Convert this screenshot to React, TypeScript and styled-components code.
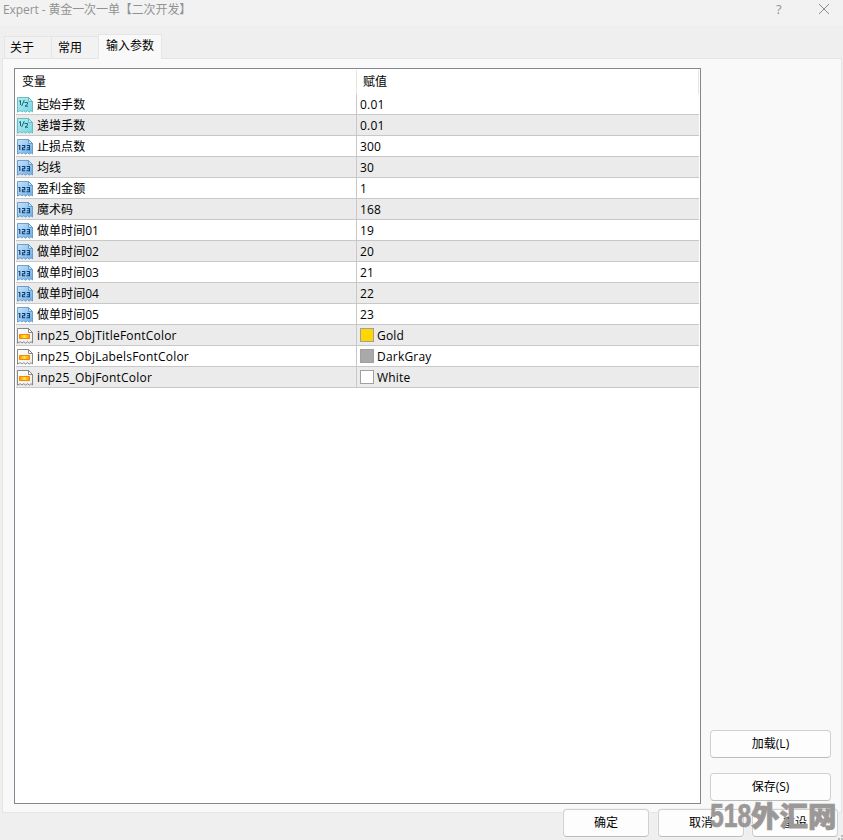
import React from "react";
import styled, { createGlobalStyle } from "styled-components";

const Global = createGlobalStyle`
  * { box-sizing: border-box; }
  body { margin: 0; overflow: hidden; background: #efefef; }
`;

const Dialog = styled.div`
  position: relative;
  display: flex;
  flex-direction: column;
  width: 843px;
  height: 840px;
  overflow: hidden;
  background: #efefef;
  color: #000;
  font: 12px/16px "Open Sans", "Noto Sans CJK SC", sans-serif;
  white-space: nowrap;
`;

const TitleBar = styled.header`
  display: flex;
  height: 25px;
  flex: none;
  background: #f2f2f2;
  color: #929292;
  padding: 2px 13px 0 3px;
`;
const Title = styled.div`
  flex: 1;
  letter-spacing: -0.1px;
`;
const Help = styled.div`
  width: 10px;
  margin-right: 32px;
  font-size: 13px;
  line-height: 15px;
`;
const CloseIcon = styled.svg`
  width: 12px;
  height: 12px;
  margin-top: 1px;
`;

const Tabs = styled.nav`
  display: flex;
  align-items: flex-end;
  height: 34px;
  flex: none;
  padding-left: 4px;
  margin-bottom: -1px;
  z-index: 1;
`;
const Tab = styled.div<{ $active?: boolean; $w: number; $inset: number }>`
  width: ${p => p.$w}px;
  height: ${p => (p.$active ? 25 : 22)}px;
  margin-bottom: ${p => (p.$active ? 0 : 1)}px;
  padding-top: 3px;
  padding-left: ${p => p.$inset}px;
  border: 1px solid #e5e5e5;
  border-bottom: 0;
  background: ${p => (p.$active ? "#f9f9f9" : "#f2f2f2")};
  & + & { margin-left: -1px; }
`;

const Panel = styled.main`
  display: flex;
  flex: none;
  width: 840px;
  height: 755px;
  margin-left: 2px;
  padding: 9px 10px 8px 11px;
  border: 1px solid #e5e5e5;
  background: #f9f9f9;
`;

const List = styled.section`
  width: 687px;
  height: 736px;
  border: 1px solid #828790;
  background: #fff;
  padding-left: 1px;
  padding-right: 1px;
`;
const HeaderRow = styled.div`
  display: flex;
  height: 25px;
  padding-top: 1px;
`;
const HeaderCell = styled.div<{ $w: number }>`
  width: ${p => p.$w}px;
  padding: 4px 0 0 6px;
  border-right: 1px solid #e5e5e5;
`;
const Row = styled.div<{ $alt: boolean }>`
  display: flex;
  height: 21px;
  border-bottom: 1px solid #c8c8c8;
  background: ${p => (p.$alt ? "#ebebeb" : "#fff")};
`;
const NameCell = styled.div`
  display: flex;
  align-items: center;
  width: 341px;
  border-right: 1px solid #c8c8c8;
`;
const ParamIcon = styled.svg`
  width: 18px;
  height: 18px;
  margin-right: 3px;
`;
const ValueCell = styled.div`
  display: flex;
  align-items: center;
  padding-left: 3px;
`;
const CellText = styled.span`
  padding-top: 2px;
  letter-spacing: 0.2px;
  &:lang(zh) { letter-spacing: 0.05px; }
`;
const Swatch = styled.span<{ $color: string }>`
  width: 14px;
  height: 14px;
  margin-right: 3px;
  border: 1px solid #a0a0a0;
  background: ${p => p.$color};
`;

const Side = styled.aside`
  display: flex;
  flex: 1;
  flex-direction: column;
  justify-content: flex-end;
  gap: 15px;
  padding: 0 0 3px 9px;
`;
const Button = styled.button<{ $w: number }>`
  width: ${p => p.$w}px;
  height: 28px;
  padding: 0;
  border: 1px solid #d0d0d0;
  border-bottom-color: #bcbcbc;
  border-radius: 4px;
  background: #fdfdfd;
  color: #000;
  font: inherit;
`;
const Footer = styled.footer`
  display: flex;
  flex: none;
  justify-content: flex-end;
  gap: 8px;
  margin-top: -4px;
  padding-right: 5px;
  ${Button} { box-shadow: 0 0 0 1px #f2f2f2; }
  ${Button}:first-child { margin-right: 1px; }
`;

const Watermark = styled.div`
  position: absolute;
  left: 710px;
  top: 794px;
  display: flex;
  align-items: center;
  height: 42px;
  color: #9b9897;
  font: 900 28.5px/42px "Noto Sans CJK SC", sans-serif;
  -webkit-text-stroke: 0.7px #9b9897;
`;
const Digits = styled.span`
  width: 41px;
  padding-top: 2px;
  font: 700 33px/42px "Liberation Sans", sans-serif;
  transform: scaleX(0.75);
  transform-origin: left;
`;
const Grip = styled.svg`
  position: absolute;
  right: 0;
  bottom: 0;
  width: 5px;
  height: 5px;
`;

type Kind = "half" | "int" | "color";
const palettes = {
  half: ["#b4eef2", "#74d6e2", "#62b4be"],
  int: ["#c6e2fb", "#6fafe6", "#5f97cb"],
  color: ["#ffffff", "#ececec", "#7b7b7b"],
};

function Icon({ kind }: { kind: Kind }) {
  const [light, dark, edge] = palettes[kind];
  return (
    <ParamIcon viewBox="0 0 18 18">
      <defs>
        <linearGradient id={`paper-${kind}`} x2="1" y2="1">
          <stop stopColor={light} /><stop offset="1" stopColor={dark} />
        </linearGradient>
        <linearGradient id="bar">
          <stop stopColor="#ff9200" /><stop offset=".5" stopColor="#ffe92c" /><stop offset="1" stopColor="#ff9200" />
        </linearGradient>
      </defs>
      <path d="M1.5 2.5H12.5L16.5 6.5V17L15 15.7 13.2 17.2 11.4 15.7 9.6 17.2 7.8 15.7 6 17 4.2 15.7 1.5 17.2Z" fill={`url(#paper-${kind})`} stroke={edge} strokeWidth=".9" />
      <path d="M12.5 2.5V6.5H16.5Z" fill={light} stroke={edge} strokeWidth=".9" />
      {kind === "half" && <path d="M3 6.5l1.5-1V10M8.3 5L5.7 11M8.5 7.5h3v1.7l-2.5 2H12" fill="none" stroke="#12606e" strokeWidth=".95" />}
      {kind === "int" && <path d="M2.5 8.5h1.3V13M6 8.5h2.7v2.2H6.5v2H9.2M10.7 8.5h2.8v4.2h-3M11 10.7h2.5" fill="none" stroke="#0d3f72" strokeWidth="1.1" />}
      {kind === "color" && <path d="M3.5 8.5h10v4h-10z" fill="url(#bar)" stroke="#f27c00" strokeWidth=".9" />}
    </ParamIcon>
  );
}

const rows: [Kind, string, string, string?][] = [
  ["half", "起始手数", "0.01"],
  ["half", "递增手数", "0.01"],
  ["int", "止损点数", "300"],
  ["int", "均线", "30"],
  ["int", "盈利金额", "1"],
  ["int", "魔术码", "168"],
  ["int", "做单时间01", "19"],
  ["int", "做单时间02", "20"],
  ["int", "做单时间03", "21"],
  ["int", "做单时间04", "22"],
  ["int", "做单时间05", "23"],
  ["color", "inp25_ObjTitleFontColor", "Gold", "#ffd700"],
  ["color", "inp25_ObjLabelsFontColor", "DarkGray", "#a9a9a9"],
  ["color", "inp25_ObjFontColor", "White", "#ffffff"],
];

export default function App() {
  return (
    <Dialog>
      <Global />
      <TitleBar>
        <Title>Expert - 黄金一次一单【二次开发】</Title>
        <Help>?</Help>
        <CloseIcon viewBox="0 0 12 12"><path d="M1 1l10 10M11 1L1 11" stroke="#8b8b8b" /></CloseIcon>
      </TitleBar>
      <Tabs>
        <Tab $w={48} $inset={5}>关于</Tab>
        <Tab $w={48} $inset={6}>常用</Tab>
        <Tab $w={64} $inset={7} $active>输入参数</Tab>
      </Tabs>
      <Panel>
        <List>
          <HeaderRow>
            <HeaderCell $w={341}>变量</HeaderCell>
            <HeaderCell $w={342}>赋值</HeaderCell>
          </HeaderRow>
          {rows.map(([kind, name, value, color], i) => (
            <Row key={name} $alt={i % 2 === 1}>
              <NameCell><Icon kind={kind} /><CellText lang={kind === "color" ? "en" : "zh"}>{name}</CellText></NameCell>
              <ValueCell>{color && <Swatch $color={color} />}<CellText>{value}</CellText></ValueCell>
            </Row>
          ))}
        </List>
        <Side>
          <Button $w={121}>加载(L)</Button>
          <Button $w={121}>保存(S)</Button>
        </Side>
      </Panel>
      <Footer>
        <Button $w={86}>确定</Button>
        <Button $w={86}>取消</Button>
        <Button $w={86}>重设</Button>
      </Footer>
      <Grip viewBox="0 0 5 5"><path d="M3 0h2v2H3zM0 3h2v2H0zM3 3h2v2H3z" fill="#bdbdbd" /></Grip>
      <Watermark><Digits>518</Digits>外汇网</Watermark>
    </Dialog>
  );
}
